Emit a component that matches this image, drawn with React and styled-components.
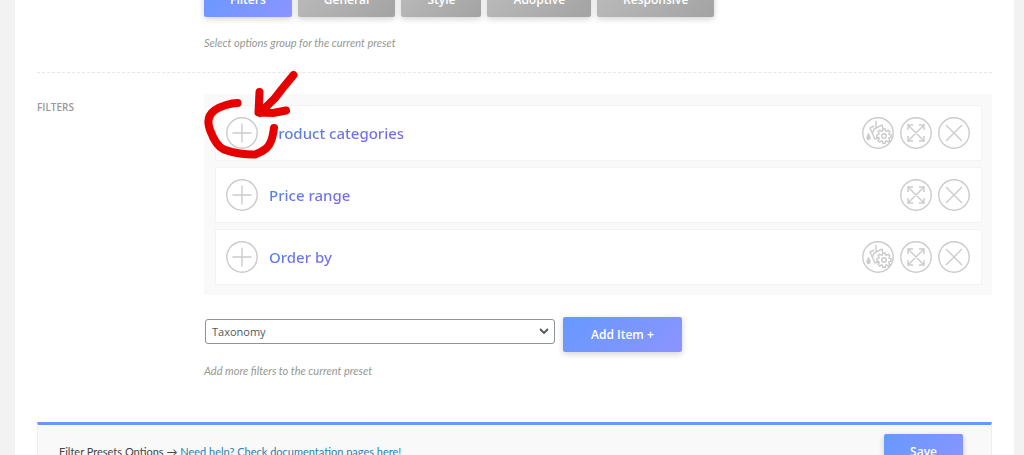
import React, { useState } from "react";
import styled, { createGlobalStyle, css } from "styled-components";

// ─── Global ─────────────────────────────────────────────────────────────────

const GlobalStyle = createGlobalStyle`
  *, *::before, *::after { box-sizing: border-box; }

  body {
    margin: 0;
    background: #f2f2f2;
    color: #444;
    font-family: "Open Sans", "Noto Sans", sans-serif;
    font-size: 11px;
  }

  button, select { font-family: inherit; }
`;

// ─── Styled Components ─────────────────────────────────────────────────────

const Page = styled.div`
  height: 100vh;
  overflow: hidden;
  padding: 0 10px 0 15px;
`;

const Panel = styled.main`
  position: relative;
  display: flow-root;
  min-height: 100%;
  padding: 0 22px;
  background: #fff;
`;

const Field = styled.section`
  display: grid;
  grid-template-columns: 167px minmax(0, 1fr);
`;

const TabsField = styled(Field)`
  margin-top: -18px;
  padding-bottom: 21px;
  border-bottom: 1px dashed #e6e6e6;
`;

const FiltersField = styled(Field)`
  padding-top: 21px;
`;

const FieldBody = styled.div`
  grid-column: 2;
`;

const FieldTitle = styled.h2`
  margin: 5px 0 0;
  color: #999;
  font-size: 10px;
  font-weight: 600;
  line-height: 16px;
  text-transform: uppercase;
`;

const Hint = styled.p`
  margin: ${({ $tight }) => ($tight ? 11 : 18)}px 0 0;
  color: #949994;
  font-family: Lato, sans-serif;
  font-size: 11px;
  font-style: italic;
  line-height: 16px;
`;

const Tabs = styled.div`
  display: flex;
  gap: 6px;
`;

const gradients = {
  blue: css`linear-gradient(135deg, #6699ff, #8c94ff)`,
  grey: css`linear-gradient(135deg, #bcbcbc, #a3a3a3)`,
};

const Button = styled.button`
  height: 35px;
  padding: 0 ${({ $wide }) => ($wide ? 28 : 26)}px;
  border: none;
  border-radius: 2px;
  background: ${({ $tone }) => gradients[$tone || "blue"]};
  box-shadow: 0 2px 6px rgba(0, 0, 0, 0.18);
  color: #fff;
  font-size: 12px;
  font-weight: 600;
  line-height: 18px;
  white-space: nowrap;
  cursor: pointer;
`;

const FilterList = styled.ul`
  display: flex;
  flex-direction: column;
  gap: 6px;
  margin: 0;
  padding: 11px 10px 10px 11px;
  background: #f9f9f9;
  list-style: none;
`;

const FilterRow = styled.li`
  display: flex;
  align-items: center;
  gap: 6px;
  height: 56px;
  padding: 0 11px 0 10px;
  border: 1px solid #f3f3f3;
  background: #fff;
`;

const FilterName = styled.span`
  margin-left: 5px;
  background: linear-gradient(170deg, #4a85e6 20%, #786cea 70%);
  background-clip: text;
  -webkit-background-clip: text;
  color: transparent;
  font-family: "Noto Sans", "Open Sans", sans-serif;
  font-size: 15px;
  font-weight: 500;
  line-height: 24px;
`;

const Spacer = styled.span`
  flex: 1;
`;

const RoundButton = styled.button`
  flex: none;
  width: 32px;
  height: 32px;
  padding: 0;
  border: none;
  border-radius: 50%;
  background: none;
  cursor: pointer;

  svg {
    display: block;
    fill: none;
    stroke: #cbcbcb;
    stroke-width: 1.4;
  }
`;

const AddRow = styled.div`
  display: flex;
  align-items: flex-start;
  gap: 8px;
  margin-top: 22px;
`;

const SelectBox = styled.div`
  position: relative;
  width: 350px;
  margin: 2px 0 0 1px;

  svg {
    position: absolute;
    top: 8px;
    right: 6px;
    pointer-events: none;
  }
`;

const Select = styled.select`
  display: block;
  width: 100%;
  height: 25px;
  padding: 0 24px 0 6px;
  border: 1px solid #8c919a;
  border-radius: 3px;
  appearance: none;
  background: #fff;
  color: #50575e;
  font-size: 11px;
`;

const Footer = styled.footer`
  display: flex;
  align-items: center;
  justify-content: space-between;
  height: 57px;
  margin-top: 43px;
  padding: 0 28px 0 21px;
  border: 1px solid #eee;
  border-top: 3px solid #6699ff;
  background: #f9f9f9;
`;

const FooterText = styled.span`
  color: #444;
  font-family: Lato, sans-serif;
  font-size: 11px;
`;

const DocsLink = styled.a`
  color: #2a80b0;
`;

const Marker = styled.svg`
  position: absolute;
  top: 66px;
  left: 185px;
  pointer-events: none;
`;

// ─── Icons ──────────────────────────────────────────────────────────────────

const shapes = {
  plus: <path d="M16 6.500v19M6.500 16h19" />,
  close: <path d="M8 8l16 16M24 8L8 24" />,
  expand: (
    <path d="M8 8l16 16M24 8L8 24M8 13V8h5M19 8h5v5M24 19v5h-5M13 24H8v-5" />
  ),
  style: (
    <>
      <path d="M14 4v8M12 9l-4 2 5 11 4-1M10 17l2-5 8-4 1 4" />
      <path d="M6.500 16c-3 5-2 7 0 7s3-2 0-7z" fill="#cbcbcb" strokeWidth="0.4" />
      <path
        fill="#fff"
        d="M20.800 12h2.400l.4 1.900 1 .4 1.600-1.100 1.700 1.700-1.100 1.600.4 1 1.900.4v2.400l-1.900.4-.4 1 1.100 1.600-1.700 1.700-1.600-1.100-1 .4-.4 1.900h-2.400l-.4-1.900-1-.4-1.600 1.100-1.700-1.700 1.100-1.600-.4-1-1.900-.4v-2.400l1.900-.4.4-1-1.100-1.600 1.700-1.700 1.600 1.100 1-.4z"
      />
      <circle cx="22" cy="19" r="2.300" />
    </>
  ),
};

const IconButton = ({ shape, label }) => (
  <RoundButton type="button" aria-label={label}>
    <svg width="32" height="32" viewBox="0 0 32 32">
      <circle cx="16" cy="16" r="15.200" />
      {shapes[shape]}
    </svg>
  </RoundButton>
);

// ─── Data ───────────────────────────────────────────────────────────────────

const tabs = ["Filters", "General", "Style", "Adoptive", "Responsive"];

const filters = [
  { name: "Product categories", styled: true },
  { name: "Price range", styled: false },
  { name: "Order by", styled: true },
];

// ─── Component ──────────────────────────────────────────────────────────────

const App = () => {
  const [active, setActive] = useState("Filters");

  return (
    <>
      <GlobalStyle />
      <Page>
        <Panel>
          <TabsField>
            <FieldBody>
              <Tabs>
                {tabs.map((tab) => (
                  <Button
                    key={tab}
                    type="button"
                    $tone={tab === active ? "blue" : "grey"}
                    onClick={() => setActive(tab)}
                  >
                    {tab}
                  </Button>
                ))}
              </Tabs>
              <Hint>Select options group for the current preset</Hint>
            </FieldBody>
          </TabsField>

          <FiltersField>
            <FieldTitle>Filters</FieldTitle>
            <FieldBody>
              <FilterList>
                {filters.map((filter) => (
                  <FilterRow key={filter.name}>
                    <IconButton shape="plus" label="Open" />
                    <FilterName>{filter.name}</FilterName>
                    <Spacer />
                    {filter.styled && <IconButton shape="style" label="Style" />}
                    <IconButton shape="expand" label="Move" />
                    <IconButton shape="close" label="Remove" />
                  </FilterRow>
                ))}
              </FilterList>

              <AddRow>
                <SelectBox>
                  <Select aria-label="Filter type" defaultValue="taxonomy">
                    <option value="taxonomy">Taxonomy</option>
                  </Select>
                  <svg width="10" height="9" viewBox="0 0 10 9">
                    <path
                      d="M1 2l4 4 4-4"
                      fill="none"
                      stroke="#50575e"
                      strokeWidth="1.8"
                    />
                  </svg>
                </SelectBox>
                <Button type="button" $wide>
                  Add Item +
                </Button>
              </AddRow>
              <Hint $tight>Add more filters to the current preset</Hint>
            </FieldBody>
          </FiltersField>

          <Footer>
            <FooterText>
              Filter Presets Options →{" "}
              <DocsLink href="#docs">
                Need help? Check documentation pages here!
              </DocsLink>
            </FooterText>
            <Button type="button">Save</Button>
          </Footer>

          {/* hand-drawn circle and arrow over the first plus */}
          <Marker
            width="120"
            height="100"
            viewBox="200 66 120 100"
            fill="none"
            stroke="#e60000"
            strokeWidth="8"
            strokeLinecap="round"
            strokeLinejoin="round"
          >
            <path d="M237.500 103C231 103 221 106 215 110C208 115 207 122 210 130C213 138 218 147 224 149.500C233 153 247 155 255 154.500C261 152 266 150 269 145C273 139 273 133 274 128" />
            <path d="M293.500 75L282 89L275 98L260 113M259.500 92L258.500 112.500L273 113L286 110.500" />
          </Marker>
        </Panel>
      </Page>
    </>
  );
};

export default App;
